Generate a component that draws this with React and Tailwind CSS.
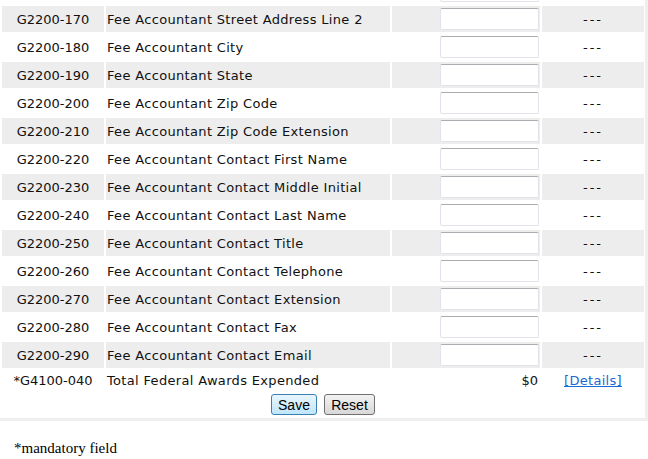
import React from "react";

const rows = [
  ["G2200-160", "Fee Accountant Street Address Line 1"],
  ["G2200-170", "Fee Accountant Street Address Line 2"],
  ["G2200-180", "Fee Accountant City"],
  ["G2200-190", "Fee Accountant State"],
  ["G2200-200", "Fee Accountant Zip Code"],
  ["G2200-210", "Fee Accountant Zip Code Extension"],
  ["G2200-220", "Fee Accountant Contact First Name"],
  ["G2200-230", "Fee Accountant Contact Middle Initial"],
  ["G2200-240", "Fee Accountant Contact Last Name"],
  ["G2200-250", "Fee Accountant Contact Title"],
  ["G2200-260", "Fee Accountant Contact Telephone"],
  ["G2200-270", "Fee Accountant Contact Extension"],
  ["G2200-280", "Fee Accountant Contact Fax"],
  ["G2200-290", "Fee Accountant Contact Email"],
];

function FieldRow({ code, label, shaded }) {
  const bg = shaded ? "bg-[#ededed]" : "bg-white";
  return (
    <>
      <div className={`${bg} h-[26px] flex items-center justify-center pt-[1px]`}>{code}</div>
      <div className={`${bg} h-[26px] flex items-center pl-[1px] pt-[1px] tracking-[0.33px]`}>{label}</div>
      <div className={`${bg} h-[26px] flex items-center justify-end pr-[1px]`}>
        <input
          type="text"
          className="w-[99px] h-[22px] bg-white border border-[#e2e3ea] border-t-[#abadb3] rounded-[2px] outline-none"
        />
      </div>
      <div className={`${bg} h-[26px] flex items-center justify-center pt-[1px] tracking-[2px]`}>---</div>
    </>
  );
}

export default function App() {
  return (
    <div className="w-[648px] h-[459px] overflow-hidden bg-white text-[#111] text-[13px] font-['DejaVu_Sans',Verdana,sans-serif]">
      <div className="mt-[-24px] border-r-[3px] border-b-[3px] border-[#efefef]">
        <div className="grid grid-cols-[102px_284px_148px_102px] gap-[2px] p-[2px]">
          {rows.map(([code, label], i) => (
            <FieldRow key={code} code={code} label={label} shaded={i % 2 === 1} />
          ))}
          <div className="h-[21px] flex items-center justify-center pt-[1px]">*G4100-040</div>
          <div className="h-[21px] flex items-center pl-[1px] pt-[1px] tracking-[0.33px]">Total Federal Awards Expended</div>
          <div className="h-[21px] flex items-center justify-end pr-[2px] pt-[1px]">$0</div>
          <div className="h-[21px] flex items-center justify-center pt-[1px]">
            <a href="#" className="text-[#1a6ad2] underline tracking-[0.3px]">[Details]</a>
          </div>
          <div className="col-span-4 h-[23px] flex items-center justify-center gap-[7px] font-['Liberation_Sans',Arial,sans-serif] text-[14px] text-black">
            <button className="h-[21px] w-[46px] rounded-[3px] border border-[#3c7fb1] bg-gradient-to-b from-[#eaf6fd] to-[#bee6fd] leading-none">
              Save
            </button>
            <button className="h-[21px] w-[51px] rounded-[3px] border border-[#707070] bg-gradient-to-b from-[#f2f2f2] to-[#d8d8d8] leading-none">
              Reset
            </button>
          </div>
        </div>
      </div>
      <div className="mt-[18px] ml-[6px] w-[118px] border-b border-[#e6e6e6] pl-[8px] pb-[2px] font-['Liberation_Serif','Times_New_Roman',serif] text-[15px] text-black leading-[18px]">
        *mandatory field
      </div>
    </div>
  );
}
